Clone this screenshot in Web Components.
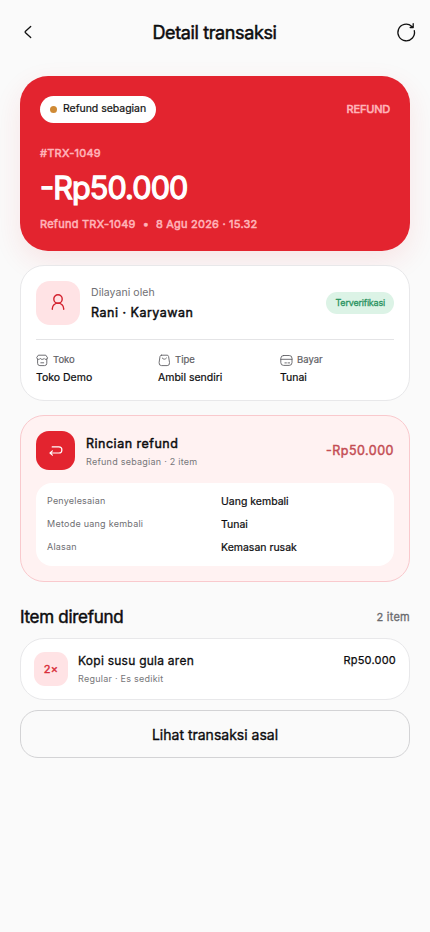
<!DOCTYPE html>
<html lang="id"><head><meta charset="utf-8"><title>Detail transaksi</title>
<style>
body{margin:0;background:#fafafa;font-family:Inter,"Liberation Sans",sans-serif;color:#0c0c0e}
</style></head><body>
<transaction-page></transaction-page>
<script>
const define=(name,html,setup)=>customElements.define(name,class extends HTMLElement{
  constructor(){super();const t=document.createElement('template');t.innerHTML=html;
    this.attachShadow({mode:'open'}).append(t.content.cloneNode(true));}
  connectedCallback(){if(setup)setup.call(this,this.shadowRoot);}
});
// type = "size stroke spacing color"
define('ui-text',`<style>:host{display:block;white-space:nowrap;line-height:1.2;font-weight:400}:host([caps]){font-feature-settings:"case"}</style><slot></slot>`,function(){
  const [size,stroke,spacing,color]=(this.getAttribute('type')||'').split(' ');
  Object.assign(this.style,{fontSize:size+'px',letterSpacing:(spacing||0)+'px',webkitTextStroke:stroke+'px'});
  if(color)this.style.color=color;
});
define('ui-card',`<style>:host{display:block;box-sizing:border-box;background:var(--bg,#fff);border:1px solid var(--line,#e8e8ea);border-radius:24px}</style><slot></slot>`);
define('app-header',`<style>
:host{display:grid;grid-template-columns:24px 1fr 24px;align-items:center;height:64px;padding:0 12px 0 16px;box-sizing:border-box}
ui-text{justify-self:center;padding:2px 5px 0 0}svg{display:block}
</style>
<svg width="24" height="24" fill="none" stroke="#111" stroke-width="1.3" stroke-linecap="round" stroke-linejoin="round"><path d="M14.7 6.5 9.5 11.2a1.1 1.1 0 0 0 0 1.6l5.2 4.7"/></svg>
<ui-text type="18 .5 -.38">Detail transaksi</ui-text>
<svg width="24" height="24" fill="none" stroke="#111" stroke-width="1.3" stroke-linecap="round" stroke-linejoin="round"><path d="M20.3 10.4A8.3 8.3 0 1 1 17.6 5.9L19 7M19.2 3.4v3.8H16.2" transform="translate(0 .3)"/></svg>`);
define('refund-hero',`<style>
:host{display:flex;flex-direction:column;box-sizing:border-box;height:175px;padding:20px;background:#e3242f;border-radius:28px;color:#fff;box-shadow:0 10px 28px rgba(227,36,47,.1)}
.top{display:flex;justify-content:space-between;align-items:center}
.pill{display:flex;align-items:center;gap:6px;height:27px;box-sizing:border-box;padding:0 10px;background:#fff;border-radius:14px;color:#111}
i{width:7px;height:7px;border-radius:50%;background:#cf8a35}
.id{margin-top:24px}.amt{margin-top:10px}.meta{display:flex;margin-top:11px;gap:7px}
</style>
<div class="top"><div class="pill"><i></i><ui-text type="10.5 .2 -.03">Refund sebagian</ui-text></div><ui-text type="11 .6 -.2 #ffb3b8">REFUND</ui-text></div>
<ui-text caps class="id" type="11 .55 .25 #ffb3b8">#TRX-1049</ui-text>
<ui-text caps class="amt" type="30.5 1.3 -.85">-Rp50.000</ui-text>
<div class="meta"><ui-text caps type="11 .55 .25 #ffb3b8">Refund TRX-1049</ui-text><ui-text type="11 .5 0 #ffb3b8">•</ui-text><ui-text type="11 .55 .22 #ffb3b8">8 Agu 2026 · 15.32</ui-text></div>`);
define('meta-field',`<style>:host{display:block}.l{display:flex;align-items:center;gap:4px;height:14px;margin-bottom:5px;color:#606064}
::slotted(svg){display:block}</style>
<div class="l"><slot name="icon"></slot><ui-text type="9.5 .2 0"><slot name="label"></slot></ui-text></div><ui-text type="10.5 .2 0"><slot></slot></ui-text>`);
define('staff-card',`<style>
:host{display:block}ui-card{height:136px;padding:15px}
.who{display:flex;align-items:center;box-sizing:border-box;padding-bottom:14px;border-bottom:1px solid #e4e4e6;height:59px}
.av{width:44px;height:44px;border-radius:14px;background:#ffe3e5;display:grid;place-items:center;margin-right:11px}
.n{flex:1;display:flex;flex-direction:column;gap:5px;padding-top:1px}
.ok{display:flex;align-items:center;height:22px;padding:0 9px;border-radius:11px;background:#dcf3e6}
.f{display:grid;grid-template-columns:122px 122px 1fr;margin-top:13px}
svg{fill:none;stroke:#606064;stroke-width:.9;stroke-linecap:round;stroke-linejoin:round}
</style><ui-card><div class="who"><div class="av"><svg width="20" height="20" style="stroke:#d3222f;stroke-width:1.4"><circle cx="10" cy="6" r="4.2"/><path d="M4.3 16.2v-.4a5.7 5.7 0 0 1 11.4 0v.4"/></svg></div>
<div class="n"><ui-text type="10.5 0 .05 #6f6f73">Dilayani oleh</ui-text><ui-text type="12.5 .45 .5">Rani · Karyawan</ui-text></div>
<div class="ok"><ui-text type="9 .3 -.2 #2b9462">Terverifikasi</ui-text></div></div>
<div class="f">
<meta-field><svg slot="icon" width="13" height="13"><path d="M1.6 5.2V9.3Q1.6 11.6 3.9 11.6H8.5Q10.8 11.6 10.8 9.3V5.2M2.7 1.2H9.8L11.6 3.9Q11.3 5.4 9.9 5.4 8.6 5.4 8.1 4.4 7.5 5.4 6.2 5.4 4.9 5.4 4.3 4.4 3.8 5.4 2.5 5.4 1.1 5.4.8 3.9ZM4.8 8.8H7.7"/></svg><span slot="label">Toko</span>Toko Demo</meta-field>
<meta-field><svg slot="icon" width="13" height="13"><path d="M3.4 1.2H9.2Q10.3 1.2 10.6 2.5L11.5 8.6Q11.8 11.6 9.2 11.6H3.5Q.8 11.6 1.1 8.6L2 2.5Q2.3 1.2 3.4 1.2ZM4.2 4Q6.3 6.7 8.5 4"/></svg><span slot="label">Tipe</span>Ambil sendiri</meta-field>
<meta-field><svg slot="icon" width="13" height="13"><rect x=".8" y="1.5" width="11.2" height="9.9" rx="2.8"/><path d="M.8 5.3H12M4.9 8.9H6.4M8 8.9H9.6"/></svg><span slot="label">Bayar</span>Tunai</meta-field>
</div></ui-card>`);
define('refund-detail',`<style>
:host{display:block}ui-card{--bg:#fff2f2;--line:#f9c9cd;height:167px;padding:15px}
.h{display:flex;align-items:center}.ic{width:39px;height:39px;border-radius:13px;background:#e3242f;display:grid;place-items:center;margin-right:11px}
.n{flex:1;display:flex;flex-direction:column;gap:6px;padding-top:3px}
.g{display:grid;grid-template-columns:174px 1fr;grid-auto-rows:23px;align-items:center;height:83px;box-sizing:border-box;padding:7px 11px;margin-top:13px;background:#fff;border-radius:16px}
.v{padding-top:1px}
</style><ui-card><div class="h"><div class="ic"><svg width="16" height="16" fill="none" stroke="#fff" stroke-width="1.2" stroke-linecap="round" stroke-linejoin="round"><path d="M4.2 3.9H10.9Q13.9 3.9 13.9 6.9 13.9 10 10.9 10H2.2M4.4 7.9 2 10 4.4 12.1"/></svg></div>
<div class="n"><ui-text type="12.5 .45 .5">Rincian refund</ui-text><ui-text type="9 0 .25 #77777a">Refund sebagian · 2 item</ui-text></div><ui-text caps type="12.5 .45 .5 #c44e54">-Rp50.000</ui-text></div>
<div class="g"><ui-text type="9 0 .2 #6f6f73">Penyelesaian</ui-text><ui-text class="v" type="10.5 .2 0">Uang kembali</ui-text>
<ui-text type="9 0 .25 #6f6f73">Metode uang kembali</ui-text><ui-text class="v" type="10.5 .2 0">Tunai</ui-text>
<ui-text type="9 0 .2 #6f6f73">Alasan</ui-text><ui-text class="v" type="10.5 .2 0">Kemasan rusak</ui-text></div></ui-card>`);
define('item-row',`<style>
:host{display:block}ui-card{display:flex;height:62px;padding:13px}
.q{width:34px;height:34px;border-radius:11px;background:#ffe3e5;display:grid;place-items:center;margin-right:10px}.q ui-text{padding-top:2px}
.n{flex:1;display:flex;flex-direction:column;gap:6px;padding-top:2px}.p{padding-top:2px}
</style><ui-card><div class="q"><ui-text type="11 .45 .2 #d9303b">2×</ui-text></div><div class="n"><ui-text type="12 .3 .25">Kopi susu gula aren</ui-text><ui-text type="9 0 .25 #77777a">Regular · Es sedikit</ui-text></div><ui-text class="p" type="11 .25 .2">Rp50.000</ui-text></ui-card>`);
define('outline-button',`<style>:host{display:grid;place-items:center;height:48px;box-sizing:border-box;padding-top:2px;border:1px solid #d3d3d5;border-radius:18px}</style><ui-text type="14 .35 0"><slot></slot></ui-text>`);
define('transaction-page',`<style>
:host{display:block;height:932px;overflow:hidden}main{display:flex;flex-direction:column;padding:12px 20px 0}
staff-card,refund-detail{margin-top:14px}.s{display:flex;justify-content:space-between;align-items:center;margin:24px 0 10px;height:22px}.c{padding-top:2px}outline-button{margin-top:10px}
</style><app-header></app-header><main><refund-hero></refund-hero><staff-card></staff-card><refund-detail></refund-detail>
<div class="s"><ui-text type="17 .45 -.3">Item direfund</ui-text><ui-text class="c" type="11 .3 .25 #6a6a6e">2 item</ui-text></div>
<item-row></item-row><outline-button>Lihat transaksi asal</outline-button></main>`);
</script></body></html>
